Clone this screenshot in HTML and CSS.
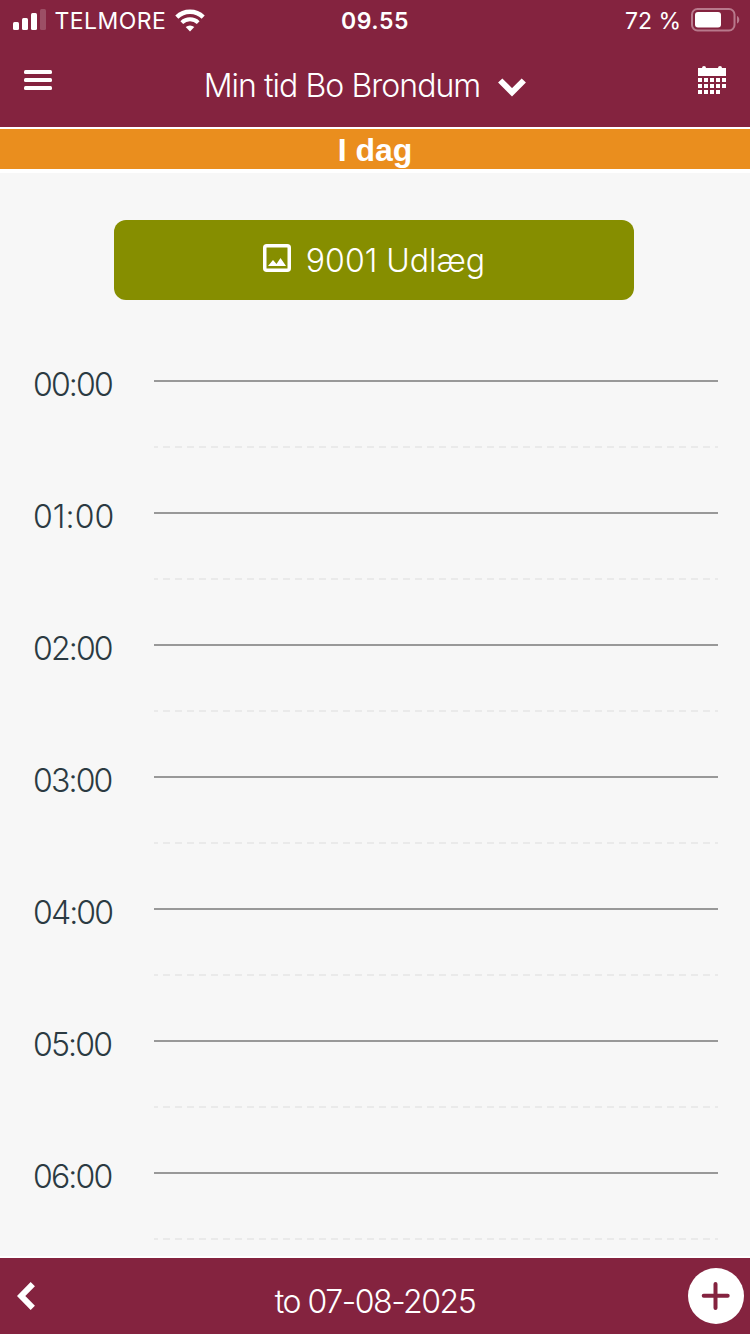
FILE: index.html
```html
<!DOCTYPE html>
<html lang="da">
<head>
<meta charset="utf-8">
<title>Min tid</title>
<link rel="stylesheet" href="styles.css">
</head>
<body>
<div class="app">
  <header class="header">
    <div class="status">
      <div class="status-left">
        <svg class="signal" width="34" height="22" viewBox="0 0 34 22" fill="#fff"><rect x="0" y="13" width="6" height="8" rx="1.5"/><rect x="9" y="9" width="6" height="12" rx="1.5"/><rect x="18" y="4" width="6" height="17" rx="1.5"/><rect x="27" y="0" width="6" height="21" rx="1.5" opacity=".2"/></svg>
        <span class="carrier">TELMORE</span>
        <svg class="wifi" width="30" height="23" viewBox="0 0 30 23" fill="none" stroke="#fff" stroke-width="4.400"><path d="M1.8 8.1a19 19 0 0 1 26.4 0"/><path d="M6.800 13.600a12 12 0 0 1 16.400 0" stroke-width="4"/><path d="M15 22.500l-4.300-4.400a6.300 6.300 0 0 1 8.600 0z" fill="#fff" stroke="none"/></svg>
      </div>
      <span class="clock">09.55</span>
      <div class="status-right">
        <span class="percent">72 %</span>
        <svg width="49" height="24" viewBox="0 0 49 24"><rect x="1" y="1" width="42.5" height="21.5" rx="5.5" fill="none" stroke="#b8798c" stroke-width="2"/><rect x="4" y="4" width="26" height="15.500" rx="3" fill="#fff"/><path d="M46 8c3 1 3 6.500 0 7.500z" fill="#b8798c"/></svg>
      </div>
    </div>
    <div class="nav">
      <svg class="menu" width="28" height="20" viewBox="0 0 28 20" fill="#fff"><rect width="28" height="4" rx="1.500"/><rect y="8" width="28" height="4" rx="1.500"/><rect y="16" width="28" height="4" rx="1.500"/></svg>
      <div class="title"><span class="title-text">Min tid Bo Brondum</span>
        <svg class="chevron" width="28" height="19" viewBox="0 0 28 19" fill="none" stroke="#fff" stroke-width="6"><path d="M2.200 2.500L14 14.300 25.800 2.500"/></svg>
      </div>
      <svg class="calendar" width="28" height="28" viewBox="0 0 28 28" fill="#fff"><path d="M0 2h4q0-2 2-2t2 2h12q0-2 2-2t2 2h4v8H0zM0 12h4v4H0zm6 0h4v4H6zm6 0h4v4h-4zm6 0h4v4h-4zm6 0h4v4h-4zM0 18h4v4H0zm6 0h4v4H6zm6 0h4v4h-4zm6 0h4v4h-4zm6 0h4v4h-4zM0 24h4v4H0zm6 0h4v4H6zm6 0h4v4h-4zm6 0h4v4h-4z"/></svg>
    </div>
  </header>
  <div class="today"><span>I dag</span></div>
  <main class="content">
    <div class="expense">
      <svg class="picture" width="28" height="28" viewBox="0 0 28 28"><rect x="1.750" y="1.750" width="24.500" height="24.500" rx="2" fill="none" stroke="#fff" stroke-width="3.500"/><path d="M5 22l5-6 3.500 4L17.500 14l5.500 8z" fill="#fff"/></svg>
      <span class="expense-text">9001 Udlæg</span>
    </div>
    <div class="hours">
      <div class="hour"><span class="time">00:00</span><div class="slot"></div></div>
      <div class="hour"><span class="time time-wide">01:00</span><div class="slot"></div></div>
      <div class="hour"><span class="time">02:00</span><div class="slot"></div></div>
      <div class="hour"><span class="time">03:00</span><div class="slot"></div></div>
      <div class="hour"><span class="time">04:00</span><div class="slot"></div></div>
      <div class="hour"><span class="time">05:00</span><div class="slot"></div></div>
      <div class="hour"><span class="time">06:00</span><div class="slot"></div></div>
    </div>
  </main>
  <footer class="footer">
    <svg class="back" width="18" height="28" viewBox="0 0 18 28" fill="none" stroke="#fff" stroke-width="6"><path d="M15.800 2.200L4.200 14l11.600 11.800"/></svg>
    <span class="date">to 07-08-2025</span>
    <svg class="add" width="56" height="56" viewBox="0 0 56 56"><circle cx="28" cy="28" r="28" fill="#fff"/><path d="M27.500 16v24M15.700 27.700h24" stroke="#84233f" stroke-width="4" stroke-linecap="round"/></svg>
  </footer>
</div>
</body>
</html>
```
FILE: styles.css
```css
* { box-sizing: border-box; }
body { margin: 0; font-family: Inter, "Liberation Sans", sans-serif; font-weight: 300; font-size: 32px; color: #2b3a42; }
svg { display: block; flex: none; }
span { white-space: nowrap; }
.app { width: 750px; height: 1334px; display: flex; flex-direction: column; overflow: hidden; background: #f7f7f7; }
.header { flex: none; height: 129px; background: #84233f; border-bottom: 2px solid #fff; color: #fff; }
.status { height: 40px; display: grid; grid-template-columns: 1fr auto 1fr; align-items: center; padding: 0 10px 0 13px; font-size: 23px; font-weight: 400; line-height: 40px; }
.status-left, .status-right { display: flex; align-items: center; }
.status-right { justify-content: flex-end; gap: 10px; }
.carrier, .clock, .percent { padding-top: 2px; line-height: 38px; }
.carrier { margin-left: 7.5px; letter-spacing: 0.45px; }
.wifi { margin-left: 9px; }
.clock { font-weight: 600; letter-spacing: 0.5px; margin-right: 3px; }
.nav { height: 87px; display: grid; grid-template-columns: 1fr auto 1fr; padding: 0 24px; }
.menu { margin-top: 30px; }
.title { display: flex; margin-right: 20px; }
.title-text { line-height: 40px; margin-top: 26px; letter-spacing: -0.95px; }
.chevron { margin: 38px 0 0 18px; }
.calendar { margin-top: 26px; justify-self: end; }
.today { flex: none; height: 44px; background: #ea8e1e; border-bottom: 4px solid #fff; color: #fff; text-align: center; font-family: "Liberation Sans", Arial, sans-serif; font-weight: 700; line-height: 42px; }
.content { flex: 1; min-height: 0; overflow: hidden; padding-top: 47px; }
.expense { width: 520px; height: 80px; margin-left: 114px; border-radius: 12px; background: #868e00; color: #fff; display: flex; justify-content: center; gap: 15px; }
.picture { margin-top: 24px; }
.expense-text { line-height: 82px; }
.hours { margin-top: 80px; }
.hour { height: 132px; display: flex; padding: 0 32px 0 33px; }
.time { width: 121px; line-height: 40px; margin-top: -15px; letter-spacing: -1.85px; }
.time-wide { letter-spacing: 0.1px; }
.slot { flex: 1; border-top: 2px solid #999; background: repeating-linear-gradient(90deg, #eaeaea 0 4px, transparent 4px 9px, #eaeaea 9px 12px) 0 64px / 100% 2px no-repeat; }
.footer { flex: none; height: 78px; background: #84233f; border-top: 2px solid #fff; color: #fff; display: grid; grid-template-columns: 1fr auto 1fr; padding: 0 6px; }
.back { margin: 24px 0 0 11px; }
.date { line-height: 40px; margin-top: 24px; letter-spacing: -1.45px; }
.add { margin-top: 10px; justify-self: end; }
```
